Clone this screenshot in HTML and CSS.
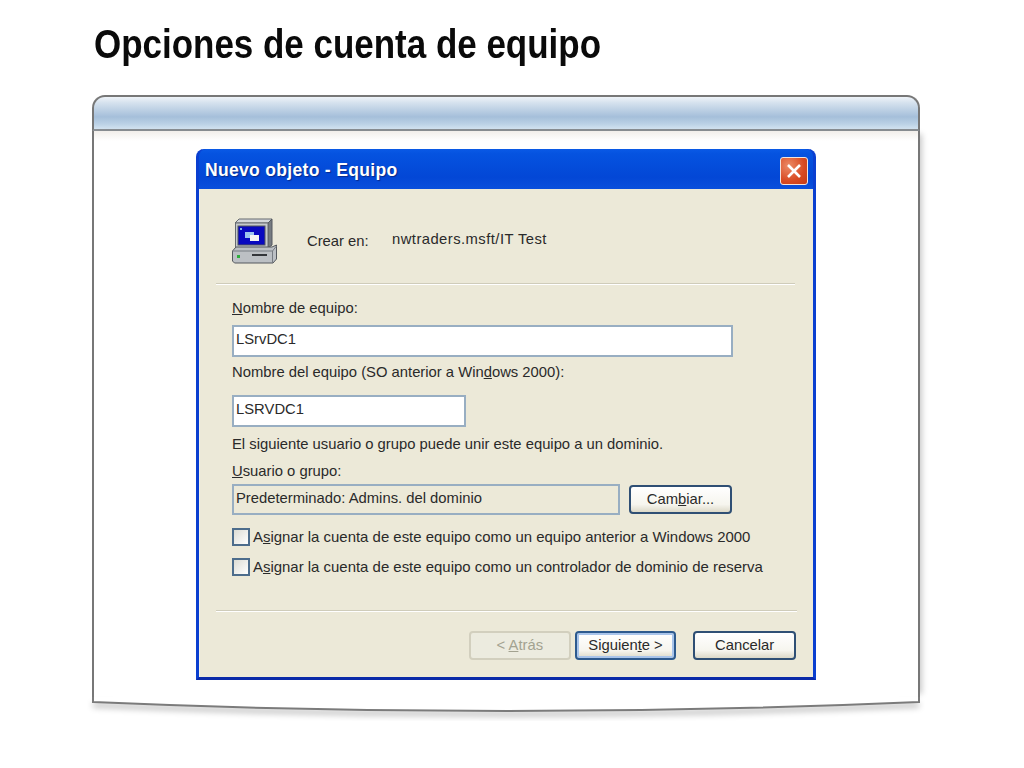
FILE: index.html
```html
<!DOCTYPE html>
<html lang="es">
<head>
    <meta charset="UTF-8">
    <title>Opciones de cuenta de equipo</title>
    <link rel="stylesheet" href="styles.css">
</head>
<body>
    <h1 class="slide-title">Opciones de cuenta de equipo</h1>
    <div class="frame">
        <div class="frame-head"></div>
        <div class="frame-body">
            <div class="dialog">
                <div class="titlebar">
                    <span class="titlebar-text">Nuevo objeto - Equipo</span>
                    <span class="close-btn">
                        <svg width="16" height="16" viewBox="0 0 16 16"><path d="M2 2 14 14M14 2 2 14" stroke="#fff" stroke-width="2.6" fill="none"/></svg>
                    </span>
                </div>
                <div class="dialog-body">
                    <div class="create-row">
                        <svg class="pc-icon" width="46" height="46" viewBox="0 0 46 46">
                            <path d="M8 1H41L37 5H4Z" fill="#d4d7da" stroke="#666b70" stroke-width="1"/>
                            <path d="M37 5 41 1V27L37 30Z" fill="#767b81" stroke="#55595e" stroke-width="1"/>
                            <rect x="4.500" y="5" width="32.500" height="25" fill="#c6cacd" stroke="#666b70" stroke-width="1"/>
                            <rect x="7" y="8" width="27" height="19" fill="#0808c0" stroke="#50555a" stroke-width="1"/>
                            <rect x="9" y="10" width="2" height="2" fill="#7fb0ee"/>
                            <rect x="14" y="14" width="9" height="6" fill="#9cc4ee"/>
                            <rect x="19" y="17" width="9" height="6" fill="#f4f4f4"/>
                            <path d="M1.500 33 5 29H41L45.500 27V41L42 45H3.500L1.500 43Z" fill="#bcc0c4" stroke="#55595e" stroke-width="1"/>
                            <path d="M1.500 33H41.500L45.500 28M41.500 33V45" fill="none" stroke="#777c82" stroke-width="1"/>
                            <rect x="6" y="37" width="3" height="3" fill="#2fae3c"/>
                            <rect x="21" y="36" width="15" height="2" fill="#33363a"/>
                        </svg>
                        <span class="create-label">Crear en:</span>
                        <span class="create-path">nwtraders.msft/IT Test</span>
                    </div>
                    <div class="separator"></div>
                    <div class="fields">
                        <label class="label label-first"><u>N</u>ombre de equipo:</label>
                        <div class="input input-wide">LSrvDC1</div>
                        <label class="label label-second">Nombre del equipo (SO anterior a Win<u>d</u>ows 2000):</label>
                        <div class="input input-short">LSRVDC1</div>
                        <p class="label label-note">El siguiente usuario o grupo puede unir este equipo a un dominio.</p>
                        <label class="label label-user"><u>U</u>suario o grupo:</label>
                        <div class="user-row">
                            <div class="input input-readonly">Predeterminado: Admins. del dominio</div>
                            <span class="btn btn-change">Cam<u>b</u>iar...</span>
                        </div>
                        <div class="check-row check-first">
                            <span class="checkbox"></span>
                            <span class="label check-text">A<u>s</u>ignar la cuenta de este equipo como un equipo anterior a Windows 2000</span>
                        </div>
                        <div class="check-row check-second">
                            <span class="checkbox"></span>
                            <span class="label check-text">A<u>s</u>ignar la cuenta de este equipo como un controlador de dominio de reserva</span>
                        </div>
                    </div>
                    <div class="separator separator-bottom"></div>
                    <div class="actions">
                        <span class="btn btn-disabled">&lt; <u>A</u>trás</span>
                        <span class="btn btn-default">Siguien<u>t</u>e &gt;</span>
                        <span class="btn btn-cancel">Cancelar</span>
                    </div>
                </div>
            </div>
        </div>
        <svg class="frame-foot" width="832" height="24" viewBox="0 0 832 24">
            <defs>
                <filter id="soft" x="-5%" y="-100%" width="110%" height="300%"><feGaussianBlur stdDeviation="3"/></filter>
            </defs>
            <path d="M3 5Q416 23 829 5" fill="none" stroke="#000" stroke-opacity=".3" stroke-width="4" filter="url(#soft)" transform="translate(0 3)"/>
            <path d="M3 0V5Q416 23 829 5V0Z" fill="#fff"/>
            <path d="M3 0V5Q416 23 829 5V0" fill="none" stroke="#7b7b7b" stroke-width="2"/>
        </svg>
    </div>
</body>
</html>
```

FILE: styles.css
```css
body {
    margin: 0;
    background: #fff;
    font-family: "Liberation Sans", Arial, sans-serif;
    overflow: hidden;
}

.slide-title {
    margin: 0;
    padding: 22px 0 0 94px;
    height: 95px;
    box-sizing: border-box;
    font-size: 40px;
    line-height: 44px;
    font-weight: 700;
    color: #0a0a0a;
    white-space: nowrap;
    transform: scaleX(0.874);
    transform-origin: 94px 0;
}

.frame {
    width: 832px;
    margin-left: 90px;
    display: flex;
    flex-direction: column;
    align-items: center;
}

.frame-head {
    width: 828px;
    height: 36px;
    box-sizing: border-box;
    border: 2px solid #777;
    border-bottom-color: #8a8f94;
    border-radius: 13px 13px 0 0;
    background: linear-gradient(#eef3f8 0, #d3e0ed 20%, #a5bfda 62%, #bcd2e6 85%, #d3e3f1 100%);
}

.frame-body {
    width: 828px;
    height: 566px;
    box-sizing: border-box;
    border-left: 2px solid #777;
    border-right: 2px solid #777;
    background: linear-gradient(#f1eeea 0, #fff 10px);
    box-shadow: 5px 0 6px -3px rgba(0, 0, 0, 0.22);
    padding: 18px 0 0 102px;
}

.frame-foot {
    display: block;
    overflow: visible;
}

.dialog {
    width: 620px;
    height: 531px;
    box-sizing: border-box;
    background: #0a46d8;
    border-radius: 8px 8px 0 0;
    border: 3px solid #0a3fd0;
    border-bottom-color: #0a2aa8;
    border-top: 0;
    display: flex;
    flex-direction: column;
}

.titlebar {
    height: 40px;
    flex: none;
    display: flex;
    align-items: center;
    justify-content: space-between;
    padding: 3px 5px 0 6px;
    box-sizing: border-box;
    border-radius: 8px 8px 0 0;
    background: linear-gradient(#0a5ae6 0, #0553e0 12%, #0347d6 70%, #0a4fdc 100%);
}

.titlebar-text {
    color: #fff;
    font-size: 17.5px;
    font-weight: 700;
    letter-spacing: 0.32px;
    text-shadow: 1px 1px 1px #0a2a8a;
}

.close-btn {
    width: 28px;
    height: 28px;
    box-sizing: border-box;
    border: 1px solid #f2e4dc;
    border-radius: 3px;
    background: radial-gradient(circle at 30% 30%, #ec8c68, #d84a22 60%, #c43a16);
    display: flex;
    align-items: center;
    justify-content: center;
}

.dialog-body {
    flex: 1;
    background: #ece9d8;
    border-left: 1px solid #f4f2e6;
    padding: 0 17px 0 16px;
    font-size: 14.8px;
    color: #2a2a2a;
}

.create-row {
    display: flex;
    align-items: center;
    height: 94px;
    padding: 10px 0 0 15px;
    box-sizing: border-box;
}

.pc-icon {
    flex: none;
}

.create-label {
    margin-left: 30px;
    width: 85px;
}

.create-path {
    margin-top: -4px;
    letter-spacing: 0.45px;
}

.separator {
    height: 2px;
    width: 579px;
    background: #cfccba;
    border-bottom: 1px solid #fff;
    box-sizing: border-box;
}

.separator-bottom {
    width: 581px;
}

.fields {
    padding-left: 16px;
    height: 325px;
    box-sizing: border-box;
}

.label {
    display: block;
    margin: 0;
    line-height: 18px;
    white-space: nowrap;
}

.label-first {
    padding-top: 14px;
}

.input {
    box-sizing: border-box;
    border: 2px solid #98aec2;
    background: #fff;
    padding-left: 2px;
    line-height: 24px;
    color: #2a2a2a;
}

.input-wide {
    width: 501px;
    height: 32px;
    margin-top: 8px;
}

.label-second {
    margin-top: 6px;
}

.input-short {
    width: 234px;
    height: 32px;
    margin-top: 14px;
}

.label-note {
    margin-top: 8px;
}

.label-user {
    margin-top: 9px;
}

.user-row {
    display: flex;
    align-items: center;
    gap: 9px;
    margin-top: 4px;
}

.input-readonly {
    width: 388px;
    height: 31px;
    background: #ece9d8;
}

.btn {
    display: block;
    box-sizing: border-box;
    width: 103px;
    height: 29px;
    line-height: 25px;
    text-align: center;
    white-space: pre;
    border: 2px solid #2f4f74;
    border-radius: 4px;
    background: linear-gradient(#fff 0, #f6f5ee 70%, #dcd9c8 100%);
}

.check-row {
    display: flex;
    align-items: center;
    gap: 3px;
}

.check-text {
    font-size: 14.95px;
}

.check-first {
    margin-top: 13px;
}

.check-second {
    margin-top: 12px;
}

.checkbox {
    flex: none;
    width: 18px;
    height: 18px;
    box-sizing: border-box;
    border: 2px solid #4d6d8c;
    background: linear-gradient(135deg, #dcdcd4, #fff);
}

.actions {
    display: flex;
    padding: 19px 0 0 253px;
}

.btn-disabled {
    width: 102px;
    color: #a3a290;
    border-color: #d2cfbe;
    background: #ecebdf;
}

.btn-default {
    width: 102px;
    margin-left: 4px;
    border-color: #2d5a8e;
    box-shadow: inset 0 0 0 2px #a8c4ea;
}

.btn-cancel {
    margin-left: 17px;
}
```
